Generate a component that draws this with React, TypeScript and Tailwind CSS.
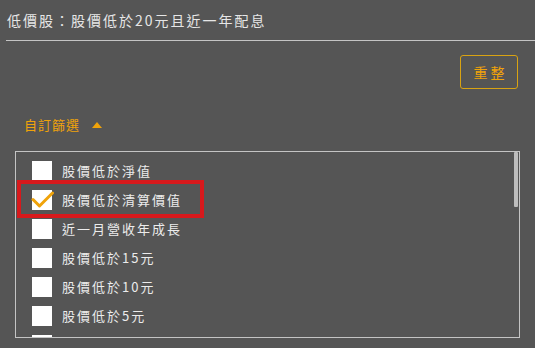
import React from 'react';

interface FilterItem {
  label: string;
  checked: boolean;
}

const items: FilterItem[] = [
  { label: '股價低於淨值', checked: false },
  { label: '股價低於清算價值', checked: true },
  { label: '近一月營收年成長', checked: false },
  { label: '股價低於15元', checked: false },
  { label: '股價低於10元', checked: false },
  { label: '股價低於5元', checked: false },
  { label: '', checked: false },
];

const Checkbox: React.FC<{ checked: boolean }> = ({ checked }) => (
  <div className="relative w-[20px] h-[20px] bg-white shrink-0">
    {checked && (
      <svg className="absolute -left-[1px] top-0 w-[23px] h-[20px]" viewBox="0 0 23 20" fill="none">
        <path d="M2 9.5 L8.5 16 L21.5 3" stroke="#f0a30a" strokeWidth="3" strokeLinecap="round" strokeLinejoin="round" />
      </svg>
    )}
  </div>
);

const App: React.FC = () => {
  return (
    <div
      className="relative w-[535px] h-[348px] bg-[#555555] overflow-hidden"
      style={{ fontFamily: '"Noto Sans CJK TC", "Noto Sans", sans-serif' }}
    >
      {/* Title */}
      <div className="ml-[6px] h-[41px] border-b border-[#c4c4c4] pl-[1px] pt-[7px]">
        <span className="text-[14px] leading-[20px] tracking-[2px] text-[#e6e6e6]">
          低價股：股價低於20元且近一年配息
        </span>
      </div>

      {/* Reset button */}
      <div className="flex justify-end pr-[17px] pt-[14px] h-[48px]">
        <button className="w-[58px] h-[34px] rounded-[3px] border border-[#d9a312] text-[#f0a30a] text-[14px] tracking-[3px] pl-[3px]">
          重整
        </button>
      </div>

      {/* Custom filter toggle */}
      <div className="flex items-center gap-[12px] pl-[24px] mt-[28px] h-[16px]">
        <span className="text-[13px] leading-[16px] tracking-[1px] text-[#f0a30a]">自訂篩選</span>
        <svg className="w-[10px] h-[6px]" viewBox="0 0 10 6">
          <path d="M0 6 L5 0 L10 6 Z" fill="#f0a30a" />
        </svg>
      </div>

      {/* List box */}
      <div className="relative ml-[15px] mt-[18px] w-[505px] h-[187px] border border-[#c4c4c4] overflow-hidden">
        <div className="flex flex-col pt-[4px] pl-[16px]">
          {items.map((item, i) => (
            <div key={i} className="flex items-center gap-[10px] h-[29px] shrink-0">
              <Checkbox checked={item.checked} />
              {item.label && (
                <span className="text-[13px] leading-[20px] tracking-[2px] text-[#ececec]">{item.label}</span>
              )}
            </div>
          ))}
        </div>
        {/* Scrollbar thumb */}
        <div className="absolute right-[1px] top-0 w-[4px] h-[55px] bg-[#bdbdbd] rounded-[1px]" />
      </div>

      {/* Highlight annotation */}
      <div className="absolute left-[17px] top-[180px] w-[187px] h-[38px] border-[4px] border-[#d7191c]" />
    </div>
  );
};

export default App;
